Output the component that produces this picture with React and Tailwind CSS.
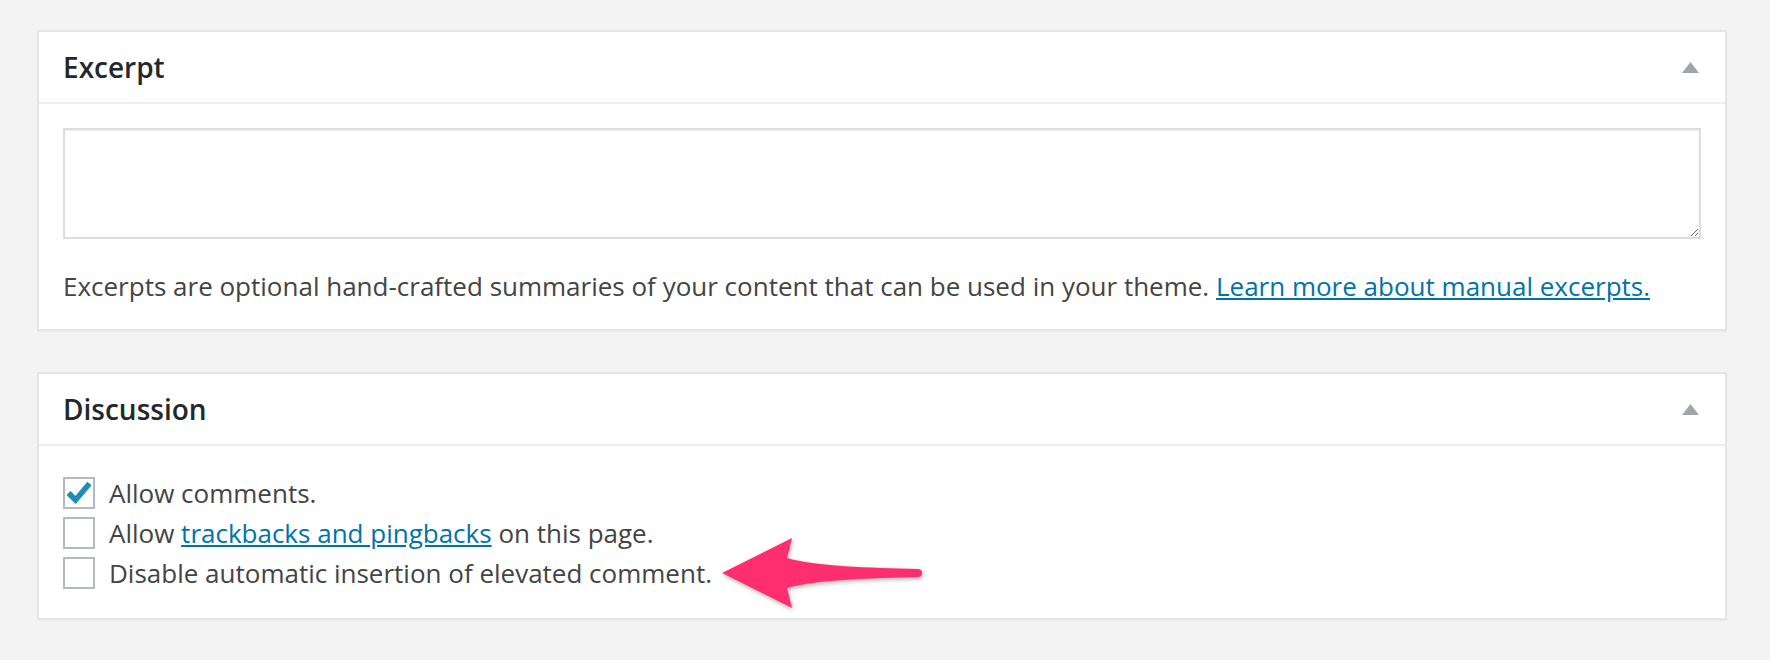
import React from 'react';

const font = { fontFamily: '"Open Sans", "Noto Sans", sans-serif' };

const Toggle = () => (
    <svg width="17" height="11" viewBox="0 0 17 11" className="block">
        <path d="M8.5 0 L17 11 L0 11 Z" fill="#a0a5aa" />
    </svg>
);

const Panel = ({ title, children, className = '' }) => (
    <div className={`bg-white border-2 border-[#e5e5e5] shadow-[0_1px_1px_rgba(0,0,0,0.04)] ${className}`}>
        <div className="h-[72px] flex items-center justify-between pl-6 pr-[26px] border-b-2 border-[#eeeeee]">
            <h2 className="text-[28px] font-semibold text-[#23282d]">{title}</h2>
            <Toggle />
        </div>
        {children}
    </div>
);

const Checkbox = ({ checked }) => (
    <span className="w-8 h-8 border-2 border-[#b4b9be] bg-white flex items-center justify-center shrink-0">
        {checked && (
            <svg width="24" height="22" viewBox="0 0 24 22">
                <path d="M1.5 11 L8.5 18 L22.5 1.5" fill="none" stroke="#1e8cbe" strokeWidth="5.5" strokeLinejoin="miter" />
            </svg>
        )}
    </span>
);

const Row = ({ checked, children }) => (
    <label className="h-10 flex items-center gap-[14px] text-[26px] text-[#444]">
        <Checkbox checked={checked} />
        <span>{children}</span>
    </label>
);

export default function App() {
    return (
        <div className="min-h-[660px] bg-[#f3f3f3] pt-[30px] pl-[37px] pr-[43px] relative" style={font}>
            {/* Excerpt */}
            <Panel title="Excerpt">
                <div className="px-6 pt-6 pb-[23px]">
                    <textarea className="block w-full h-[111px] border-2 border-[#dddddd] shadow-[inset_0_1px_2px_rgba(0,0,0,0.07)] outline-none" />
                    <p className="mt-[27px] text-[26px] leading-[40px] text-[#444]">
                        Excerpts are optional hand-crafted summaries of your content that can be used in your theme.{' '}
                        <a href="#" className="text-[#0073aa] underline">Learn more about manual excerpts.</a>
                    </p>
                </div>
            </Panel>

            {/* Discussion */}
            <Panel title="Discussion" className="mt-[41px]">
                <div className="px-6 pt-[27px] pb-[25px]">
                    <Row checked>Allow comments.</Row>
                    <Row>
                        Allow <a href="#" className="text-[#0073aa] underline">trackbacks and pingbacks</a> on this page.
                    </Row>
                    <Row>Disable automatic insertion of elevated comment.</Row>
                </div>
            </Panel>

            {/* annotation arrow */}
            <svg
                width="220"
                height="90"
                viewBox="0 0 220 90"
                className="absolute left-[710px] top-[530px] drop-shadow-[1px_2px_2px_rgba(0,0,0,0.3)]"
            >
                <path
                    d="M12 43 L82 8 L77 28 C105 36 160 38 208 39 A4 4 0 0 1 208 47 C160 48 105 50 77 58 L82 78 Z"
                    fill="#ff2e6e"
                />
            </svg>
        </div>
    );
}
